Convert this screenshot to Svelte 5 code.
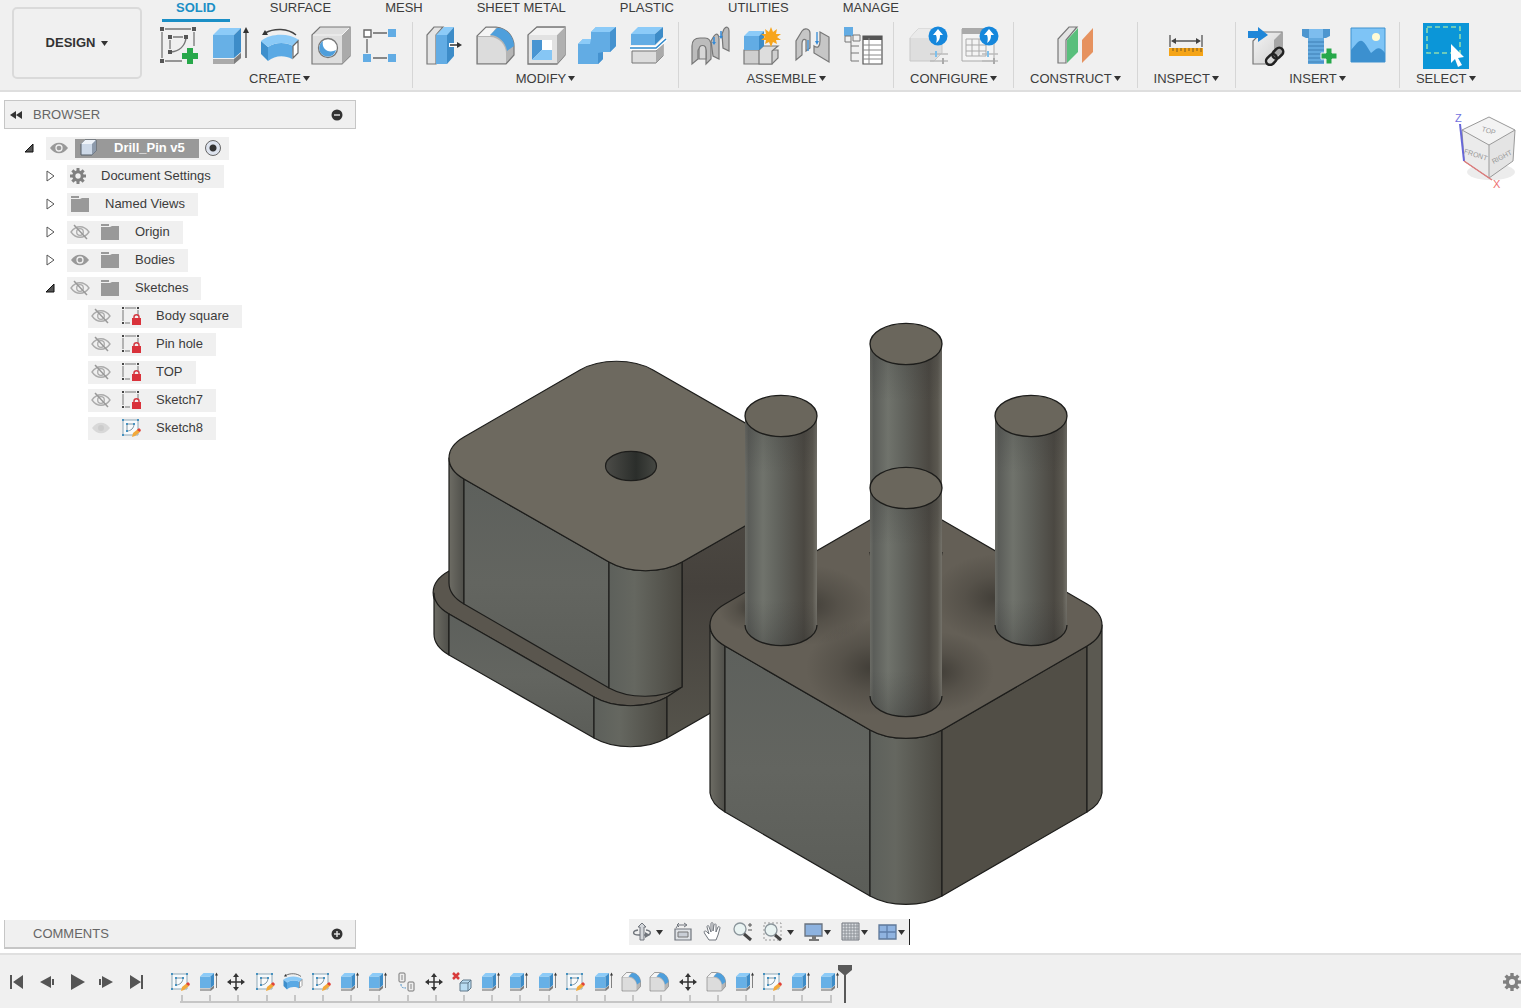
<script lang="ts">
  type Tool = { icon: string; label: string };
  type Group = { name: string; tools: Tool[] };
  type Row = {
    name: string;
    level: number;
    arrow?: "open" | "closed";
    eye?: "on" | "off" | "dim";
    icon: string;
    root?: boolean;
  };

  const tabs = ["SOLID", "SURFACE", "MESH", "SHEET METAL", "PLASTIC", "UTILITIES", "MANAGE"];
  let activeTab = $state("SOLID");

  const groups: Group[] = [
    {
      name: "CREATE",
      tools: [
        { icon: "sketch-new", label: "Create Sketch" },
        { icon: "extrude", label: "Extrude" },
        { icon: "revolve", label: "Revolve" },
        { icon: "hole", label: "Hole" },
        { icon: "pattern", label: "Rectangular Pattern" },
      ],
    },
    {
      name: "MODIFY",
      tools: [
        { icon: "press-pull", label: "Press Pull" },
        { icon: "fillet", label: "Fillet" },
        { icon: "shell", label: "Shell" },
        { icon: "combine", label: "Combine" },
        { icon: "split", label: "Split Body" },
      ],
    },
    {
      name: "ASSEMBLE",
      tools: [
        { icon: "insert-joint", label: "Assemble" },
        { icon: "component", label: "New Component" },
        { icon: "joint", label: "Joint" },
        { icon: "bom", label: "Bill of Materials" },
      ],
    },
    {
      name: "CONFIGURE",
      tools: [
        { icon: "config-cube", label: "Configure Design" },
        { icon: "config-table", label: "Configuration Table" },
      ],
    },
    { name: "CONSTRUCT", tools: [{ icon: "plane", label: "Offset Plane" }] },
    { name: "INSPECT", tools: [{ icon: "measure", label: "Measure" }] },
    {
      name: "INSERT",
      tools: [
        { icon: "derive", label: "Insert Derive" },
        { icon: "bolt", label: "Insert Fastener" },
        { icon: "picture", label: "Canvas" },
      ],
    },
    { name: "SELECT", tools: [{ icon: "select", label: "Select" }] },
  ];

  const rows: Row[] = [
    { name: "Drill_Pin v5", level: 0, arrow: "open", eye: "on", icon: "body", root: true },
    { name: "Document Settings", level: 1, arrow: "closed", icon: "gear" },
    { name: "Named Views", level: 1, arrow: "closed", icon: "folder" },
    { name: "Origin", level: 1, arrow: "closed", eye: "off", icon: "folder" },
    { name: "Bodies", level: 1, arrow: "closed", eye: "on", icon: "folder" },
    { name: "Sketches", level: 1, arrow: "open", eye: "off", icon: "folder" },
    { name: "Body square", level: 2, eye: "off", icon: "sketch-lock" },
    { name: "Pin hole", level: 2, eye: "off", icon: "sketch-lock" },
    { name: "TOP", level: 2, eye: "off", icon: "sketch-lock" },
    { name: "Sketch7", level: 2, eye: "off", icon: "sketch-lock" },
    { name: "Sketch8", level: 2, eye: "dim", icon: "sketch" },
  ];

  const navTools = [
    { icon: "orbit", label: "Orbit", menu: "far" },
    { icon: "look", label: "Look At" },
    { icon: "pan", label: "Pan" },
    { icon: "zoom", label: "Zoom" },
    { icon: "fit", label: "Fit", menu: "far" },
    { icon: "display", label: "Display Settings", menu: "near" },
    { icon: "grid", label: "Grid and Snaps", menu: "near" },
    { icon: "viewports", label: "Viewports", menu: "near" },
  ];

  const playback = [
    { label: "Go to start", d: "M2 3h2v14H2zM5 10 15 3v14z" },
    { label: "Step back", d: "M2 10 13 4v12zM14 7h2v6h-2z" },
    { label: "Play", d: "M3 2 17 10 3 18z" },
    { label: "Step forward", d: "M1 7h2v6H1zM4 4l11 6-11 6z" },
    { label: "Go to end", d: "M2 3l11 7-11 7zM13 3h2v14h-2z" },
  ];

  const history = [
    "sketch", "extrude", "move", "sketch", "revolve", "sketch", "extrude", "extrude",
    "copy", "move", "remove", "extrude", "extrude", "extrude", "sketch", "extrude",
    "fillet", "fillet", "move", "fillet", "extrude", "sketch", "extrude", "extrude",
  ];

  // back to front
  const pins = [
    { x: 906, y: 344, base: 552 },
    { x: 781, y: 416, base: 625 },
    { x: 1031, y: 416, base: 625 },
    { x: 906, y: 488, base: 696 },
  ];

  const gearTeeth = [0, 45, 90, 135, 180, 225, 270, 315];
</script>

{#snippet caret()}
  <svg class="caret" viewBox="0 0 7 7" aria-hidden="true"><path d="M0 1h7L3.500 6z" fill="#333" /></svg>
{/snippet}

<!-- shared icon shapes -->
<svg class="defs" aria-hidden="true">
  <defs>
    <linearGradient id="g-gray" x1="0" y1="0" x2="1" y2="1">
      <stop offset="0" stop-color="#f4f4f4" />
      <stop offset="1" stop-color="#cfcfcf" />
    </linearGradient>
  </defs>

  <symbol id="sketch-new" viewBox="0 0 40 40">
    <path d="M7 3h26M4 6v26M7 35h17M36 6v14M15 11h10M12 14v9" stroke="#777" stroke-width="1.3" fill="none" />
    <path d="M28 12C27 20 21 25 13 26" stroke="#777" stroke-width="1.5" fill="none" />
    <path d="M2 1h4v4H2zM34 1h4v4h-4zM2 33h4v4H2zM10 9h4v4h-4zM26 9h4v4h-4zM10 24h4v4h-4z" fill="#555" />
    <path d="M29 22h6v5h5v6h-5v5h-6v-5h-5v-6h5z" fill="#27a84a" />
  </symbol>
  <symbol id="extrude" viewBox="0 0 40 40">
    <path d="M4 33h21l7-6v5l-7 6H4z" fill="#aaa" />
    <path d="M25 33l7-6v5l-7 6z" fill="#7d7d7d" />
    <path d="M4 9h21v23H4z" fill="#67b0e6" />
    <path d="M4 9l7-7h21l-7 7z" fill="#8ccbf8" />
    <path d="M25 9l7-7v24l-7 6z" fill="#3d8cc8" />
    <path d="M37 6v26" stroke="#444" stroke-width="1.3" />
    <path d="M34 7l3-6 3 6z" fill="#333" />
  </symbol>
  <symbol id="revolve" viewBox="0 0 40 40">
    <path d="M1 15l7 6v14l-7-7z" fill="#3e8fcc" />
    <path d="M8 21c7-5 18-5 25-1l-1 13c-7-4-17-4-24 2z" fill="#5aa9e4" />
    <path d="M1 15C11 7 29 7 39 14l-6 6c-7-4-18-4-25 1z" fill="#8bcaf7" />
    <path d="M33 20l5-5v12l-5 5z" fill="#fff" stroke="#666" stroke-width="1.2" />
    <path d="M36 9C28 2 14 2 5 7" fill="none" stroke="#444" stroke-width="1.5" />
    <path d="M2 9l3-5 3 5z" fill="#333" />
  </symbol>
  <symbol id="hole" viewBox="0 0 40 40">
    <path d="M1 9l8-8h30v29l-8 8H1z" fill="#dedede" stroke="#777" stroke-width="1.2" />
    <path d="M31 9l8-8v29l-8 8z" fill="#aaa" />
    <path d="M2 9h29l7-7" fill="none" stroke="#f4f4f4" />
    <circle cx="17" cy="22" r="9.5" fill="#fff" stroke="#777" stroke-width="1.3" />
    <path d="M12 15a8.500 8.500 0 1 0 13 9c-7 4-15-1-13-9z" fill="#4e9edb" />
  </symbol>
  <symbol id="pattern" viewBox="0 0 40 40">
    <path d="M11 7h14M5 13v14M11 32h14" stroke="#666" stroke-width="1.3" />
    <path d="M2 4h7v7H2z" fill="#fff" stroke="#666" stroke-width="1.4" />
    <path d="M26 3h8v8h-8zM1 28h8v8H1zM26 28h8v8h-8z" fill="#62ace4" />
  </symbol>
  <symbol id="press-pull" viewBox="0 0 40 40">
    <path d="M3 38V9l7-8h9l-7 8v29z" fill="#e4e4e4" stroke="#777" stroke-width="1.2" />
    <path d="M12 9h11v29H12z" fill="#62ace4" />
    <path d="M12 9l8-8h10l-7 8z" fill="#8ccbf8" />
    <path d="M23 9l7-8v29l-7 8z" fill="#3d8cc8" />
    <path d="M25 19h9" stroke="#fff" stroke-width="4" />
    <path d="M26 19h8" stroke="#333" stroke-width="1.5" />
    <path d="M33 16l5 3-5 3z" fill="#333" />
  </symbol>
  <symbol id="fillet" viewBox="0 0 40 40">
    <path d="M2 38V10l9-9h10C33 2 39 12 39 20v9l-8 9z" fill="#b5b5b5" stroke="#777" stroke-width="1.2" />
    <path d="M3 37V11h12c9 0 16 8 16 16v10z" fill="#dcdcdc" />
    <path d="M3 10l8-8h10l-6 8z" fill="#f5f5f5" />
    <path d="M15 9l7-7C33 2 39 12 39 20l-7 5C31 16 23 9 15 9z" fill="#4e9fdc" />
  </symbol>
  <symbol id="shell" viewBox="0 0 40 40">
    <path d="M2 9l9-8h28v28l-8 9H2z" fill="#e2e2e2" stroke="#777" stroke-width="1.3" />
    <path d="M31 9l8-8v28l-8 9z" fill="#b0b0b0" />
    <path d="M3 9l8-7h27l-7 7z" fill="#f3f3f3" />
    <path d="M6 14h20v20H6z" fill="#fff" />
    <path d="M6 14h10v10L6 34z" fill="#4995d2" />
    <path d="M6 34l10-10h10v10z" fill="#86c6f4" />
  </symbol>
  <symbol id="combine" viewBox="0 0 40 40">
    <path d="M1 18l5-5h8V6l5-5h20v19l-6 6h-7v7l-5 5H1z" fill="#62ace4" />
    <path d="M1 18l5-5h8l-1 5zM14 6l5-5h20l-6 5z" fill="#8ccbf8" />
    <path d="M33 6l6-5v19l-6 6zM21 38l5-5v-7l-5 1z" fill="#4592cf" />
  </symbol>
  <symbol id="split" viewBox="0 0 40 40">
    <path d="M4 25h24l7-7v12l-7 7H4z" fill="#ddd" stroke="#777" />
    <path d="M28 25l7-7v12l-7 7z" fill="#aaa" />
    <path d="M3 8h24v11H3z" fill="#62ace4" />
    <path d="M3 8l7-7h25l-8 7z" fill="#8ccbf8" />
    <path d="M27 8l8-7v10l-8 8z" fill="#3d8cc8" />
    <path d="M2 22h26l10-9" fill="none" stroke="#fff" stroke-width="4" />
    <path d="M2 22h26l10-9" fill="none" stroke="#2f89cc" stroke-width="1.5" />
  </symbol>
  <symbol id="insert-joint" viewBox="0 0 40 40">
    <g fill="#bcbcbc" stroke="#777" stroke-width="1.2">
      <path d="M32 8l2-5c3-4 5-1 5 2v20l-6-3z" />
      <path d="M21 15l3-5c3-4 5-1 5 3v20l-6-3z" />
      <path d="M2 38V20c0-6 3-8 8-8h5c4 0 6 3 6 8v13l-5 5V25c0-4-8-4-8 0v8z" />
      <path d="M9 24c0-6 7-6 7 0v9H9z" fill="#d6d6d6" />
    </g>
    <path d="M24 11v6M31 5v6" stroke="#3389d6" stroke-width="1.5" />
    <path d="M22 16h4l-2 3zM29 10h4l-2 3z" fill="#3389d6" />
  </symbol>
  <symbol id="component" viewBox="0 0 40 40">
    <path d="M3 24h34v8l-6 6H3z" fill="#cfcfcf" stroke="#777" stroke-width="1.2" />
    <path d="M18 24l4-4h15l-6 5v13H18z" fill="#ddd" stroke="#777" stroke-width="1.2" />
    <path d="M3 10h15v14H3z" fill="#62ace4" />
    <path d="M3 10l5-5h15l-5 5z" fill="#8ccbf8" />
    <path d="M18 10l5-5v15l-5 4z" fill="#3d8cc8" />
    <path d="M30 1l2 5 4-3-1 5 5 0-4 3 4 3-5 0 1 4-4-2-2 5-2-5-4 2 1-4-5 0 4-3-4-3 5 0-1-5 4 3z" fill="#f7a51c" />
  </symbol>
  <symbol id="joint" viewBox="0 0 40 40">
    <g fill="#c6c6c6" stroke="#777" stroke-width="1.2">
      <path d="M4 34V15L10 5c3-4 8-2 8 2v15l-4 3V14c-3-2-4 1-4 4v11z" />
      <path d="M22 20c4 3 6 0 6-5V6l9 5v25l-15-9z" />
    </g>
    <path d="M16 14v11M25 6v10" stroke="#4e98d8" stroke-width="1.5" />
    <path d="M23 15h4l-2 4z" fill="#3389d6" />
  </symbol>
  <symbol id="bom" viewBox="0 0 40 40">
    <path d="M1 1h9v9H1z" fill="#62ace4" />
    <path d="M2 10h6v6H2zM10 9h7v6h-7zM8 16v19M8 20h8M8 27h8M8 35h8" fill="none" stroke="#777" />
    <path d="M20 10h19v28H20z" fill="#fff" stroke="#555" stroke-width="1.2" />
    <path d="M20 10h19v4H20z" fill="#555" />
    <path d="M20 19h19M20 24h19M20 29h19M20 33h19M26 12v26" stroke="#888" />
  </symbol>
  <symbol id="config-cube" viewBox="0 0 40 40">
    <path d="M2 12l8-9h24v24l-8 8H2z" fill="#dedede" stroke="#c8c8c8" />
    <path d="M2 12l8-9h24l-8 9z" fill="#eaeaea" />
    <circle cx="30" cy="10" r="9.5" fill="#1587dc" />
    <path d="M30 3l5 6h-3c0 4-1 6-4 8 1-3 1-5 0-8h-3z" fill="#fff" />
    <path d="M22 28h18M22 35h18" stroke="#bbb" stroke-width="1.5" />
    <path d="M28 25v6" stroke="#7ec0ec" stroke-width="2" />
    <path d="M35 32v6" stroke="#aaa" stroke-width="2" />
  </symbol>
  <symbol id="config-table" viewBox="0 0 40 40">
    <path d="M3 3h32v32H3z" fill="#f4f4f4" stroke="#aaa" />
    <path d="M3 2h28v6H3z" fill="#aaa" />
    <path d="M7 13h20v17H7zM7 19h20M7 25h20M13 13v17M20 13v17" fill="none" stroke="#aaa" />
    <circle cx="30" cy="10" r="9.5" fill="#1587dc" />
    <path d="M30 3l5 6h-3c0 4-1 6-4 8 1-3 1-5 0-8h-3z" fill="#fff" />
    <path d="M23 28h16M23 35h16" stroke="#bbb" stroke-width="1.5" />
    <path d="M29 25v6" stroke="#7ec0ec" stroke-width="2" />
    <path d="M35 32v6" stroke="#aaa" stroke-width="2" />
  </symbol>
  <symbol id="plane" viewBox="0 0 40 40">
    <path d="M3 37V13L14 1h8L11 14v23z" fill="#e4e4e4" stroke="#777" stroke-width="1.2" />
    <path d="M12 14L23 2v24L12 37z" fill="#59bf7c" />
    <path d="M27 14L38 2v24L27 37z" fill="#e6925f" />
  </symbol>
  <symbol id="measure" viewBox="0 0 40 40">
    <path d="M4 9v12M36 9v12M7 15h26" stroke="#555" stroke-width="1.3" />
    <path d="M5 15l5-3v6zM35 15l-5-3v6z" fill="#444" />
    <path d="M3 22h34v8H3z" fill="#f5a416" />
    <path d="M7 22v3M11 22v4M15 22v3M19 22v4M23 22v3M27 22v4M31 22v3M35 22v4" stroke="#7a5a20" />
  </symbol>
  <symbol id="derive" viewBox="0 0 40 40">
    <path d="M7 15l9-9h20v20l-8 12H7z" fill="url(#g-gray)" stroke="#777" stroke-width="1.2" />
    <path d="M28 14l8-8v20l-8 7z" fill="#a6a6a6" />
    <path d="M2 5h10V1l10 8-10 7v-4H2z" fill="#1f86d8" />
    <g fill="none" stroke="#222" stroke-width="2.5" transform="rotate(-45 29 30)">
      <rect x="18" y="26" width="12" height="8" rx="4" />
      <rect x="27" y="26" width="12" height="8" rx="4" />
    </g>
  </symbol>
  <symbol id="bolt" viewBox="0 0 40 40">
    <path d="M5 3h28v7l-4 2H9l-4-2z" fill="#4d96cf" />
    <path d="M12 3h14v9H12z" fill="#7dbdee" />
    <path d="M11 12h16v26H11z" fill="#63a9de" />
    <path d="M11 16h16M11 20h16M11 24h16M11 28h16M11 32h16M11 36h16" stroke="#3f7fb4" />
    <path d="M29 22h6v5h5v6h-5v5h-6v-5h-5v-6h5z" fill="#27a84a" stroke="#f0f0f0" />
  </symbol>
  <symbol id="picture" viewBox="0 0 40 40">
    <path d="M3 2h34v34H3z" fill="#7ec4f6" stroke="#3f92cf" />
    <circle cx="28" cy="11" r="4" fill="#fffbd6" />
    <path d="M3 36V24l6-7c4-4 6-2 9 2l5 8 5-4c3-2 6 0 9 4v9z" fill="#3c90cf" />
  </symbol>
  <symbol id="select" viewBox="0 0 46 46">
    <path d="M0 0h46v46H0z" fill="#0b96d8" />
    <path d="M4 4h33v26H4z" fill="none" stroke="#8fdcb0" stroke-width="1.6" stroke-dasharray="5 3" />
    <path d="M28 21l13 13-6 1 4 7-4 2-3-8-4 4z" fill="#fff" />
  </symbol>

  <symbol id="body" viewBox="0 0 20 20">
    <path d="M2 6l4-4h11v11l-4 4H2z" fill="#cdd9e8" stroke="#555e68" />
    <path d="M2 6l4-4h11l-4 4z" fill="#eef3f9" />
    <path d="M13 6l4-4v11l-4 4z" fill="#8d9aab" />
  </symbol>
  <symbol id="gear" viewBox="0 0 16 16">
    {#each gearTeeth as angle (angle)}
      <rect x="6.5" y="0" width="3" height="4" fill="#808080" transform={`rotate(${angle} 8 8)`} />
    {/each}
    <circle cx="8" cy="8" r="4.2" fill="none" stroke="#808080" stroke-width="3" />
  </symbol>
  <symbol id="folder" viewBox="0 0 20 20">
    <path d="M1 2h8v2H1zM1 5h9l2-1h7v14H1z" fill="#999" />
  </symbol>
  <symbol id="eye-on" viewBox="0 0 20 20">
    <path d="M1 10c5-7 13-7 18 0-5 7-13 7-18 0z" fill="#999" />
    <circle cx="10" cy="10" r="3" fill="none" stroke="#f0f0f0" stroke-width="1.3" />
  </symbol>
  <symbol id="eye-dim" viewBox="0 0 20 20">
    <path d="M1 10c5-7 13-7 18 0-5 7-13 7-18 0z" fill="#d8d8d8" />
    <circle cx="10" cy="10" r="3" fill="#ccc" />
  </symbol>
  <symbol id="eye-off" viewBox="0 0 20 20">
    <path d="M1 10c5-7 13-7 18 0-5 7-13 7-18 0z" fill="none" stroke="#aaa" stroke-width="1.3" />
    <circle cx="10" cy="10" r="3.3" fill="none" stroke="#aaa" stroke-width="1.3" />
    <path d="M4 3l13 14" stroke="#999" stroke-width="1.5" />
  </symbol>
  <symbol id="sketch-lock" viewBox="0 0 20 20">
    <path d="M4 2h11M2 4v11M4 17h5M17 4v6" stroke="#777" fill="none" />
    <path d="M1 1h2v2H1zM16 1h2v2h-2zM1 16h2v2H1z" fill="#444" />
    <path d="M13 13v-2c0-3 5-3 5 0v2" fill="none" stroke="#d33a42" stroke-width="1.5" />
    <path d="M11 12h9v7h-9z" fill="#d9323b" />
  </symbol>
  <symbol id="sketch" viewBox="0 0 20 20">
    <path d="M2 2h15v15H2z" fill="#f7fafc" stroke="#8fa9b8" />
    <path d="M6 6h7c0 4-3 7-7 7z" fill="none" stroke="#8095a2" />
    <path d="M1 1h2v2H1zM16 1h2v2h-2zM1 16h2v2H1zM5 5h2v2H5zM12 5h2v2h-2zM5 12h2v2H5z" fill="#4791bf" />
    <path d="M11 19l1-4 5-4 2 3-5 4z" fill="#f2a93b" />
    <path d="M16 12l2-2 2 2-1 2z" fill="#e0413a" />
  </symbol>
  <symbol id="move" viewBox="0 0 20 20">
    <path d="M10 3v14M3 10h14" stroke="#333" stroke-width="1.5" />
    <path d="M10 1l3 4H7zM10 19l3-4H7zM1 10l4-3v6zM19 10l-4-3v6z" fill="#333" />
  </symbol>
  <symbol id="copy" viewBox="0 0 20 20">
    <rect x="3" y="1" width="6" height="9" rx="1" fill="#eee" stroke="#777" />
    <rect x="12" y="10" width="6" height="9" rx="1" fill="#eee" stroke="#777" />
    <path d="M6 3v5M15 12v5" stroke="#888" />
    <path d="M5 12c0 3 1 4 5 4" fill="none" stroke="#4d92c9" stroke-dasharray="2 1" />
  </symbol>
  <symbol id="remove" viewBox="0 0 20 20">
    <path d="M1 1l6 6M7 1L1 7" stroke="#d83b3b" stroke-width="2.5" />
    <path d="M8 11l3-3h8v8l-3 3H8z" fill="#b9dcf1" stroke="#60798a" />
    <path d="M8 11h8v8M16 11l3-3" fill="none" stroke="#60798a" />
  </symbol>

  <symbol id="orbit" viewBox="0 0 20 20">
    <path d="M6 8C0 9 0 13 7 13h8M14 8c6 1 5 4 2 5" fill="none" stroke="#70757c" stroke-width="1.4" />
    <path d="M8 5H6l4-4 4 4h-2v13H8z" fill="#d4d7db" stroke="#70757c" />
    <path d="M13 10l5 3-5 3z" fill="#70757c" />
  </symbol>
  <symbol id="look" viewBox="0 0 20 20">
    <path d="M2 7h16v11H2z" fill="#dfe2e6" stroke="#70757c" stroke-width="1.2" />
    <path d="M5 10h10v5H5z" fill="#c9ced6" stroke="#777" />
    <path d="M3 6l2-3h8M6 1L4 3l2 2M11 1l3 2-3 2" fill="none" stroke="#70757c" />
  </symbol>
  <symbol id="pan" viewBox="0 0 20 20">
    <path d="M6 18L2 12c-2-3 0-4 2-2l2 2-2-7c0-2 2-2 2 0l2 5V2c0-2 2-2 2 0v7l1-6c1-2 2-1 2 0v7l2-5c1-1 2 0 2 1l-2 7-2 5z" fill="#fff" stroke="#70757c" />
  </symbol>
  <symbol id="zoom" viewBox="0 0 20 20">
    <circle cx="7" cy="7" r="6" fill="#e9f3f2" stroke="#8b959b" stroke-width="1.3" />
    <path d="M11 12l7 6" stroke="#444" stroke-width="3" />
    <path d="M15 3h4M17 1v4M15 8h4" stroke="#555" />
  </symbol>
  <symbol id="fit" viewBox="0 0 20 20">
    <path d="M1 1h17v17H1z" fill="none" stroke="#999" stroke-dasharray="2 2" />
    <circle cx="8" cy="8" r="6" fill="#e9f3f2" stroke="#8b959b" stroke-width="1.3" />
    <path d="M12 13l6 5" stroke="#444" stroke-width="3" />
  </symbol>
  <symbol id="display" viewBox="0 0 20 20">
    <path d="M1 2h17v12H1z" fill="#8db2df" stroke="#68727e" stroke-width="1.3" />
    <path d="M8 14h4v3h3v2H5v-2h3z" fill="#777" />
  </symbol>
  <symbol id="grid" viewBox="0 0 20 20">
    <path d="M1 1h17v17H1z" fill="#d9dce0" stroke="#70757c" />
    <path d="M4 1v17M7 1v17M10 1v17M13 1v17M16 1v17M1 4h17M1 7h17M1 10h17M1 13h17M1 16h17" stroke="#8c9197" />
  </symbol>
  <symbol id="viewports" viewBox="0 0 20 20">
    <path d="M1 3h17v14H1z" fill="#8fb3e0" stroke="#5f7898" stroke-width="1.3" />
    <path d="M9 3v14M1 10h17" stroke="#5f7fab" stroke-width="1.3" />
  </symbol>
</svg>

<div class="app">
  <header class="ribbon">
    <button class="workspace">DESIGN {@render caret()}</button>
    <div class="ribbon-body">
      <nav class="tabs" aria-label="Workspace tabs">
        {#each tabs as tab (tab)}
          <button class="tab" class:active={tab === activeTab} onclick={() => (activeTab = tab)}>{tab}</button>
        {/each}
      </nav>
      <div class="groups">
        {#each groups as group (group.name)}
          <div class="group">
            <div class="tools">
              {#each group.tools as tool (tool.icon)}
                <button class="tool" aria-label={tool.label}>
                  <svg class:large={tool.icon === "select"}><use href={`#${tool.icon}`} /></svg>
                </button>
              {/each}
            </div>
            <button class="group-label">{group.name} {@render caret()}</button>
          </div>
        {/each}
      </div>
    </div>
  </header>

  <main class="canvas">
    <svg class="model" viewBox="0 92 1521 861" role="img" aria-label="Drill pin model">
      <defs>
        <linearGradient id="m-pin">
          <stop offset="0" stop-color="#6b6c66" />
          <stop offset="0.05" stop-color="#5b5d59" />
          <stop offset="0.25" stop-color="#70736c" />
          <stop offset="0.45" stop-color="#62645e" />
          <stop offset="0.82" stop-color="#4b4842" />
          <stop offset="0.94" stop-color="#5b5850" />
          <stop offset="1" stop-color="#74726a" />
        </linearGradient>
        <linearGradient id="m-pin-shade" x2="0" y2="1">
          <stop offset="0" stop-color="#333" stop-opacity="0.25" />
          <stop offset="0.25" stop-color="#333" stop-opacity="0" />
          <stop offset="0.8" stop-color="#333" stop-opacity="0" />
          <stop offset="1" stop-color="#222" stop-opacity="0.25" />
        </linearGradient>
        <linearGradient id="m-corner">
          <stop offset="0" stop-color="#5d605b" />
          <stop offset="0.35" stop-color="#656760" />
          <stop offset="1" stop-color="#4a4841" />
        </linearGradient>
        <linearGradient id="m-edge">
          <stop offset="0" stop-color="#6d6c64" />
          <stop offset="1" stop-color="#4f4f4a" />
        </linearGradient>
        <linearGradient id="m-front" x2="0" y2="1">
          <stop offset="0" stop-color="#5d605c" />
          <stop offset="0.5" stop-color="#636560" />
          <stop offset="1" stop-color="#5b5d58" />
        </linearGradient>
        <linearGradient id="m-right" x2="0" y2="1">
          <stop offset="0" stop-color="#4d4943" />
          <stop offset="0.35" stop-color="#45413c" />
          <stop offset="1" stop-color="#55534b" />
        </linearGradient>
        <linearGradient id="m-hole">
          <stop offset="0" stop-color="#4c4c48" />
          <stop offset="0.6" stop-color="#2b2e2b" />
          <stop offset="1" stop-color="#464843" />
        </linearGradient>
        <radialGradient id="m-ao">
          <stop offset="0" stop-color="#25231f" stop-opacity="0.55" />
          <stop offset="0.5" stop-color="#25231f" stop-opacity="0.22" />
          <stop offset="1" stop-color="#25231f" stop-opacity="0" />
        </radialGradient>
        <clipPath id="m-top-clip">
          <path d="M725 646A51.6 29.8 0 0 1 725 604L870 520A51.6 29.8 0 0 1 942 520L1087 604A51.6 29.8 0 0 1 1087 646L942 730A51.6 29.8 0 0 1 870 730Z" />
        </clipPath>
      </defs>

      <!-- cap with flange -->
      <g stroke="#1d1d1b" stroke-width="1.2" stroke-linejoin="round">
        <path d="M449 571A51.6 29.8 0 0 0 449 614L594 697A51.6 29.8 0 0 0 667 697L682 687L500 560Z" fill="#5a564e" />
        <path d="M434 593A51.6 29.8 0 0 0 449 614V655A51.6 29.8 0 0 1 434 634Z" fill="url(#m-edge)" />
        <path d="M449 614L594 697V738L449 655Z" fill="url(#m-front)" />
        <path d="M594 697A51.6 29.8 0 0 0 667 697V738A51.6 29.8 0 0 1 594 738Z" fill="url(#m-corner)" />
        <path d="M682 562L780 506V673L667 738V697L682 687Z" fill="url(#m-right)" />
        <path d="M449 458A51.6 29.8 0 0 0 464 479V604A51.6 29.8 0 0 1 449 583Z" fill="url(#m-edge)" />
        <path d="M464 479L609 562V688L464 604Z" fill="url(#m-front)" />
        <path d="M609 562A51.6 29.8 0 0 0 682 562V687A51.6 29.8 0 0 1 609 688Z" fill="url(#m-corner)" />
        <path d="M464 479A51.6 29.8 0 0 1 464 437L580 370A51.6 29.8 0 0 1 653 370L780 443V506L682 562A51.6 29.8 0 0 1 609 562Z" fill="#6d695f" />
        <ellipse cx="631" cy="466" rx="25.5" ry="14.7" fill="url(#m-hole)" />
      </g>

      <!-- base block -->
      <g stroke="#1d1d1b" stroke-width="1.2" stroke-linejoin="round">
        <path d="M710 625A51.6 29.8 0 0 0 725 646V812A51.6 29.8 0 0 1 710 793Z" fill="url(#m-edge)" />
        <path d="M725 646L870 730V896L725 812Z" fill="url(#m-front)" />
        <path d="M870 730A51.6 29.8 0 0 0 942 730V896A51.6 29.8 0 0 1 870 896Z" fill="url(#m-corner)" />
        <path d="M942 730L1087 646V812L942 896Z" fill="#514e46" />
        <path d="M1087 646A51.6 29.8 0 0 0 1102 625V793A51.6 29.8 0 0 1 1087 812Z" fill="#5b5951" />
        <path d="M725 646A51.6 29.8 0 0 1 725 604L870 520A51.6 29.8 0 0 1 942 520L1087 604A51.6 29.8 0 0 1 1087 646L942 730A51.6 29.8 0 0 1 870 730Z" fill="#645f56" />
      </g>
      <g clip-path="url(#m-top-clip)" fill="url(#m-ao)">
        <ellipse cx="806" cy="605" rx="66" ry="40" />
        <ellipse cx="996" cy="598" rx="64" ry="44" />
        <ellipse cx="872" cy="668" rx="66" ry="48" />
        <ellipse cx="938" cy="672" rx="56" ry="40" />
        <ellipse cx="752" cy="608" rx="34" ry="24" />
      </g>
      {#each pins as pin, i (i)}
        {@const side = `M${pin.x - 36} ${pin.y}V${pin.base}A36 20.6 0 0 0 ${pin.x + 36} ${pin.base}V${pin.y}Z`}
        <path d={side} fill="url(#m-pin)" />
        <path d={side} fill="url(#m-pin-shade)" />
        <path d={`M${pin.x - 36} ${pin.base}A36 20.6 0 0 0 ${pin.x + 36} ${pin.base}`} fill="none" stroke="#1d1d1b" stroke-width="1.3" />
        <ellipse cx={pin.x} cy={pin.y} rx="36" ry="20.6" fill="#6a665c" stroke="#1d1d1b" stroke-width="1.3" />
      {/each}
    </svg>

    <aside class="browser">
      <div class="panel-bar">
        <button class="round-btn" aria-label="Collapse browser">
          <svg viewBox="0 0 14 14"><path d="M1 7l6-4v8zM7 7l6-4v8z" fill="#333" /></svg>
        </button>
        <h2>BROWSER</h2>
        <button class="round-btn" aria-label="Minimize">
          <svg viewBox="0 0 14 14"><circle cx="7" cy="7" r="5.5" fill="#333" /><path d="M4 7h6" stroke="#ddd" stroke-width="1.5" /></svg>
        </button>
      </div>
      <ul class="tree">
        {#each rows as row (row.name)}
          <li class="row" class:level-1={row.level === 1} class:level-2={row.level === 2}>
            <span class="arrow">
              {#if row.arrow}
                <button aria-label={`Toggle ${row.name}`}>
                  <svg viewBox="0 0 12 12">
                    {#if row.arrow === "open"}
                      <path d="M10 2v8H2z" fill="#555" stroke="#111" />
                    {:else}
                      <path d="M3 1l7 5-7 5z" fill="#fff" stroke="#555" />
                    {/if}
                  </svg>
                </button>
              {/if}
            </span>
            <div class="chip">
              {#if row.eye}
                <button class="eye" aria-label={`Visibility of ${row.name}`}>
                  <svg><use href={`#eye-${row.eye}`} /></svg>
                </button>
              {/if}
              <span class="item" class:root={row.root}>
                <svg class:small={row.icon === "gear"}><use href={`#${row.icon}`} /></svg>
                <span>{row.name}</span>
              </span>
              {#if row.root}
                <input type="radio" name="active-component" aria-label="Activate component" checked />
              {/if}
            </div>
          </li>
        {/each}
      </ul>
    </aside>

    <svg class="viewcube" viewBox="0 0 72 90" role="img" aria-label="View cube">
      <ellipse cx="42" cy="70" rx="24" ry="8" fill="#ececec" />
      <path d="M13 28L40 15l26 13-26 15z" fill="#f3f3f3" />
      <path d="M13 28l27 15v33L15 59z" fill="#ebebeb" />
      <path d="M40 43l26-15-2 31-24 17z" fill="#e4e4e4" />
      <path d="M13 28L40 15l26 13-2 31-24 17-25-17zM13 28l27 15 26-15M40 43v33" fill="none" stroke="#999" />
      <path d="M11 22l4 37" stroke="#6767d8" stroke-width="2" />
      <path d="M15 59l28 19" stroke="#df7b7b" stroke-width="1.5" />
      <g font-size="7" fill="#999" text-anchor="middle">
        <text transform="translate(39 31) rotate(16)">TOP</text>
        <text transform="translate(26 55) rotate(18)">FRONT</text>
        <text transform="translate(54 57) rotate(-28)">RIGHT</text>
      </g>
      <text x="6" y="20" font-size="11" fill="#7272de">Z</text>
      <text x="44" y="86" font-size="11" fill="#ee7070">X</text>
    </svg>

    <section class="comments panel-bar">
      <h2>COMMENTS</h2>
      <button class="round-btn" aria-label="Expand comments">
        <svg viewBox="0 0 14 14"><circle cx="7" cy="7" r="5.5" fill="#333" /><path d="M4 7h6M7 4v6" stroke="#ddd" stroke-width="1.5" /></svg>
      </button>
    </section>

    <div class="navbar" role="toolbar" aria-label="Navigation">
      {#each navTools as tool (tool.icon)}
        <button class:far={tool.menu === "far"} aria-label={tool.label}>
          <svg class="nav-icon"><use href={`#${tool.icon}`} /></svg>
          {#if tool.menu}{@render caret()}{/if}
        </button>
      {/each}
    </div>
  </main>

  <footer class="timeline">
    <div class="playback">
      {#each playback as item (item.label)}
        <button aria-label={item.label}>
          <svg viewBox="0 0 20 20"><path d={item.d} fill="#555" /></svg>
        </button>
      {/each}
    </div>
    <ol class="history">
      {#each history as feature, i (i)}
        <li>
          <button aria-label={feature}><svg><use href={`#${feature}`} /></svg></button>
        </li>
      {/each}
    </ol>
    <svg class="marker" viewBox="0 0 16 38" aria-hidden="true">
      <path d="M1 0h14v5L9 10v28H7V10L1 5z" fill="#595959" />
    </svg>
    <button class="settings" aria-label="Timeline settings">
      <svg><use href="#gear" /></svg>
    </button>
  </footer>
</div>

<style>
  :global(body) {
    margin: 0;
  }

  .app {
    display: flex;
    flex-direction: column;
    min-height: 100vh;
    font-family: "Liberation Sans", Arial, sans-serif;
    font-size: 13px;
    line-height: 16px;
    color: #3c3c3c;
    background: #fff;
  }

  .defs {
    position: absolute;
    width: 0;
    height: 0;
  }

  button {
    display: flex;
    align-items: center;
    justify-content: center;
    padding: 0;
    border: 0;
    background: none;
    font: inherit;
    color: inherit;
    white-space: nowrap;
  }

  svg {
    display: block;
    flex-shrink: 0;
  }

  h2 {
    margin: 0;
    flex: 1;
    font-size: 13px;
    font-weight: 400;
    color: #666;
  }

  .caret {
    width: 7px;
    height: 7px;
  }

  .ribbon {
    display: flex;
    background: #f0f0f0;
    border-bottom: 2px solid #dedede;
  }

  .workspace {
    width: 130px;
    height: 72px;
    margin: 7px 5px 0 12px;
    gap: 6px;
    box-sizing: border-box;
    border: 2px solid #dadada;
    border-radius: 5px;
    font-weight: 700;
    color: #333;
  }

  .ribbon-body {
    flex: 1;
  }

  .tabs {
    display: flex;
    gap: 26px;
    padding-left: 15px;
  }

  .tab {
    height: 22px;
    padding: 0 14px 3px;
    border-bottom: 3px solid transparent;
  }

  .tab.active {
    border-color: #1b8fc6;
    font-weight: 700;
    color: #1b8fc6;
  }

  .groups {
    display: flex;
    padding-bottom: 2px;
  }

  .group {
    padding: 1px 5px 0;
    border-right: 1px solid #d6d6d6;
  }

  .group:last-child {
    border-right: 0;
  }

  .tools {
    display: flex;
    justify-content: center;
  }

  .tool {
    width: 51px;
    height: 46px;
  }

  .tool svg {
    width: 40px;
    height: 40px;
  }

  .tool svg.large {
    width: 46px;
    height: 46px;
  }

  .group-label {
    width: 100%;
    height: 19px;
    padding: 0 11px;
    box-sizing: border-box;
    gap: 2px;
  }

  .canvas {
    flex: 1;
    display: grid;
    grid-template: 1fr / 1fr;
    background: #fff;
  }

  /* everything in the canvas floats over the model */
  .canvas > * {
    grid-area: 1 / 1;
  }

  .model {
    width: 100%;
    height: 100%;
    min-height: 0;
  }

  .browser {
    place-self: start;
    padding: 8px 0 0 4px;
  }

  .panel-bar {
    display: flex;
    align-items: center;
    width: 352px;
    height: 29px;
    box-sizing: border-box;
    padding-right: 11px;
    background: #f0f0f0;
    border: 1px solid #c6c6c6;
  }

  .panel-bar .round-btn:first-child {
    margin: 0 10px 0 4px;
  }

  .round-btn svg {
    width: 14px;
    height: 14px;
  }

  .comments {
    place-self: end start;
    margin: 0 0 4px 4px;
    padding-left: 28px;
    border-top: 0;
    border-bottom-width: 2px;
  }

  .tree {
    margin: 5px 0 0;
    padding: 0;
    list-style: none;
  }

  .row {
    display: flex;
    align-items: center;
    height: 28px;
    padding-left: 14px;
  }

  .level-1 {
    padding-left: 35px;
  }

  .level-2 {
    padding-left: 56px;
  }

  .arrow {
    display: flex;
    justify-content: center;
    width: 22px;
    margin-right: 6px;
  }

  .arrow svg {
    width: 12px;
    height: 12px;
  }

  .chip {
    display: flex;
    align-items: center;
    height: 23px;
    gap: 10px;
    padding: 0 13px 0 3px;
    background: #f0f0f0;
  }

  .chip svg {
    width: 20px;
    height: 20px;
  }

  .chip svg.small {
    width: 16px;
    height: 16px;
  }

  .item {
    display: flex;
    align-items: center;
    gap: 15px;
  }

  .chip:has(.root) {
    gap: 6px;
    padding-right: 8px;
  }

  .root {
    height: 19px;
    padding: 0 14px 0 4px;
    background: #999;
    color: #fff;
    font-weight: 700;
  }

  .chip input {
    appearance: none;
    width: 16px;
    height: 16px;
    margin: 0;
    border: 1px solid #666;
    border-radius: 50%;
    background: radial-gradient(circle, #333 0 3px, #dde3ee 4px);
  }

  .viewcube {
    place-self: start end;
    width: 72px;
    height: 90px;
    margin-top: 10px;
  }

  .navbar {
    display: flex;
    align-items: center;
    place-self: end center;
    height: 26px;
    gap: 10px;
    margin: 0 0 8px 17px;
    padding: 0 4px 0 3px;
    background: #f0f0f0;
    border-right: 1px solid #222;
  }

  .navbar .far {
    gap: 4px;
  }

  .nav-icon {
    width: 20px;
    height: 20px;
  }

  .timeline {
    display: flex;
    height: 55px;
    box-sizing: border-box;
    background: #f0f0f0;
    border-top: 2px solid #e0e0e0;
  }

  .playback {
    display: flex;
    padding: 12px 13px 0 3px;
  }

  .playback button {
    width: 30px;
    height: 30px;
  }

  .playback svg {
    width: 20px;
    height: 20px;
  }

  .history {
    display: flex;
    width: 677px;
    margin: 0;
    padding: 17px 0 0;
    list-style: none;
  }

  .history li {
    flex: 1;
    height: 29px;
    border-bottom: 2px solid #c6c6c6;
    background: linear-gradient(#c6c6c6, #c6c6c6) 15px 100% / 2px 6px no-repeat;
  }

  /* the rail starts and ends at a tick */
  .history li:first-child {
    border-image: linear-gradient(to right, transparent 50%, #c6c6c6 50%) 1;
  }

  .history li:last-child {
    border-image: linear-gradient(to right, #c6c6c6 60%, transparent 60%) 1;
  }

  .history button {
    width: 28px;
    height: 20px;
  }

  .history svg {
    width: 20px;
    height: 20px;
  }

  .marker {
    width: 16px;
    height: 38px;
    margin: 10px 0 0 -6px;
  }

  .settings {
    margin: 12px 0 0 auto;
    height: 30px;
  }

  .settings svg {
    width: 18px;
    height: 18px;
  }
</style>
